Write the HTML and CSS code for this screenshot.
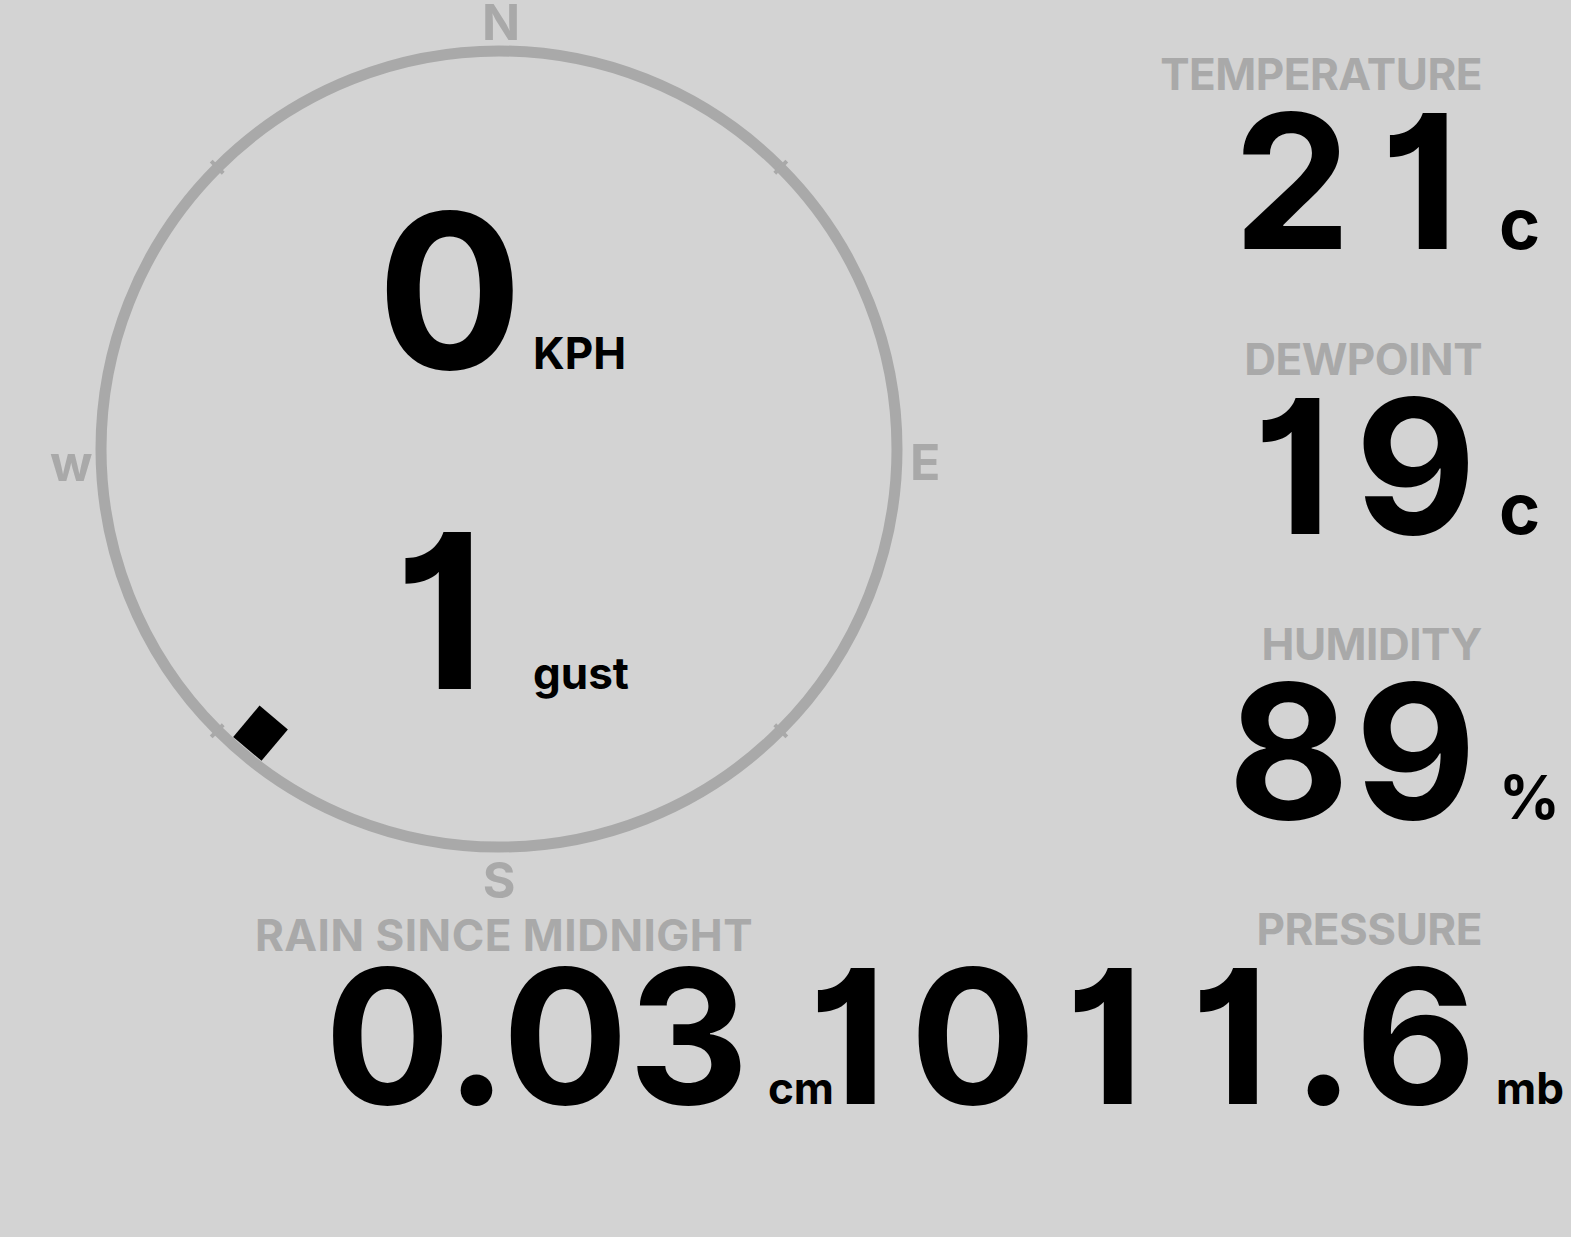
FILE: index.html
```html
<!DOCTYPE html>
<html>

<head>
    <title>Weather Station</title>
    <link rel="stylesheet" href="styles.css">
</head>

<body>
    <div class="station">
        <div class="compass">
            <svg class="rose" viewBox="0 0 1000 907" width="1000" height="907">
                <circle class="ring" cx="499" cy="449" r="398" />
                <g class="ticks" transform="translate(499 449)">
                    <line x1="0" y1="-390" x2="0" y2="-407" transform="rotate(45)" />
                    <line x1="0" y1="-390" x2="0" y2="-407" transform="rotate(135)" />
                    <line x1="0" y1="-390" x2="0" y2="-407" transform="rotate(225)" />
                    <line x1="0" y1="-390" x2="0" y2="-407" transform="rotate(315)" />
                </g>
                <text class="point" x="501" y="40" text-anchor="middle">N</text>
                <text class="point" x="910" y="480">E</text>
                <text class="point" x="499" y="898" text-anchor="middle">S</text>
                <text class="point" x="50" y="481">w</text>
                <!-- wind direction marker, bearing in degrees -->
                <rect class="vane" x="-18.5" y="-20.5" width="37" height="41"
                    transform="translate(499 449) rotate(220) translate(0 -371)" />
            </svg>
            <div class="speeds">
                <div class="speed">
                    <span class="big">0</span>
                    <span class="speed-unit">KPH</span>
                </div>
                <div class="speed">
                    <span class="big"><span class="one">1</span></span>
                    <span class="speed-unit">gust</span>
                </div>
            </div>
        </div>

        <div class="readings">
            <div class="reading">
                <div class="label">TEMPERATURE</div>
                <div class="value">
                    <span class="num">2<span class="one">1</span></span>
                    <span class="unit">c</span>
                </div>
            </div>
            <div class="reading">
                <div class="label">DEWPOINT</div>
                <div class="value">
                    <span class="num"><span class="one">1</span>9</span>
                    <span class="unit">c</span>
                </div>
            </div>
            <div class="reading">
                <div class="label">HUMIDITY</div>
                <div class="value">
                    <span class="num">89</span>
                    <span class="unit pct">%</span>
                </div>
            </div>
        </div>

        <div class="rain">
            <div class="label">RAIN SINCE MIDNIGHT</div>
            <div class="value">
                <span class="num">0.03</span>
                <span class="unit small">cm</span>
            </div>
        </div>

        <div class="reading pressure">
            <div class="label">PRESSURE</div>
            <div class="value">
                <span class="num"><span class="one">1</span>0<span class="one">1</span><span class="one">1</span>.6</span>
                <span class="unit small">mb</span>
            </div>
        </div>
    </div>
</body>

</html>
```

FILE: styles.css
```css
body {
    margin: 0;
    background: #d3d3d3;
    color: #000;
    font-family: "Inter", "Roboto", "DejaVu Sans", sans-serif;
    font-weight: 700;
}

.station {
    display: grid;
    grid-template-columns: 1000px minmax(0, 1fr);
}

/* compass */

.compass {
    display: grid;
}

.rose,
.speeds {
    grid-area: 1 / 1;
}

.ring {
    fill: none;
    stroke: #a9a9a9;
    stroke-width: 11;
}

.ticks line {
    stroke: #a9a9a9;
    stroke-width: 4;
}

.point {
    fill: #a9a9a9;
    font-size: 50px;
    font-weight: 700;
}

.vane {
    fill: #000;
}

.speeds {
    padding: 131px 0 0 377px;
}

.speed {
    display: flex;
    align-items: baseline;
    height: 320px;
}

.big {
    width: 156px;
    font-size: 216px;
    line-height: 320px;
    font-feature-settings: "cv01";
}

.speed-unit {
    font-size: 44px;
}

/* digit one sits in a cell as wide as the other digits */
.one {
    display: inline-block;
    width: 0.67em;
    text-align: center;
    letter-spacing: 0;
}

.big .one {
    width: 0.58em;
}

/* readings */

.readings {
    min-width: 0;
    padding: 52px 89px 0 0;
}

.reading {
    height: 285px;
}

.pressure {
    height: auto;
    min-width: 0;
    padding-right: 89px;
}

.label {
    color: #a9a9a9;
    font-size: 44px;
    line-height: 44px;
    letter-spacing: -0.5px;
    text-align: right;
    white-space: nowrap;
}

.value {
    display: flex;
    justify-content: flex-end;
    align-items: baseline;
    height: 171px;
    margin-right: -80px;
    white-space: nowrap;
}

.num {
    font-size: 187px;
    line-height: 171px;
    font-feature-settings: "cv01";
    letter-spacing: 0.03em;
}

.unit {
    width: 80px;
    padding-left: 17px;
    box-sizing: border-box;
    font-size: 70px;
}

.unit.pct {
    font-size: 60px;
}

.unit.small {
    padding-left: 14px;
    font-size: 44px;
}

/* rain */

.rain .label {
    text-align: center;
    letter-spacing: 0.5px;
    margin: 6px 0 -6px 8px;
}

.rain .value {
    margin-right: 0;
    padding-right: 166px;
}

.rain .num {
    letter-spacing: 0;
}

.rain .unit {
    width: auto;
    padding-left: 19px;
}
```
